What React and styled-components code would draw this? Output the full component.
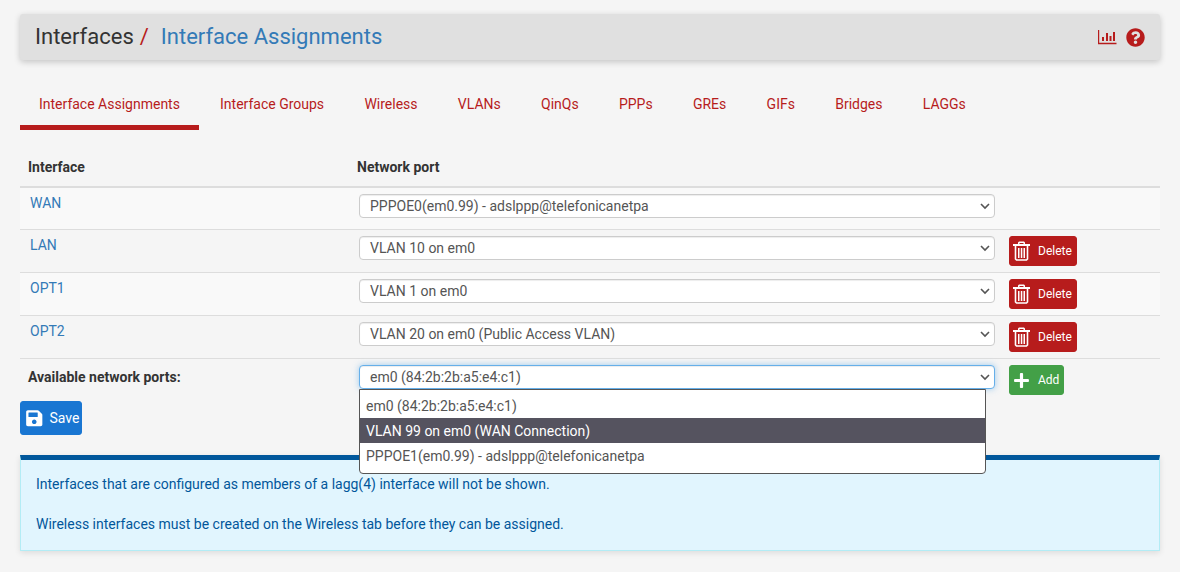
import React from 'react'
import styled, { createGlobalStyle } from 'styled-components'
import { FaSave, FaPlus, FaQuestionCircle } from 'react-icons/fa'

const GlobalStyle = createGlobalStyle`
  html, body {
    margin: 0;
    padding: 0;
    background: #f5f5f5;
  }
  * { box-sizing: border-box; }
`

const Page = styled.div`
  width: 1180px;
  height: 572px;
  padding: 14px 20px 0;
  overflow: hidden;
  font-family: Roboto, "Liberation Sans", sans-serif;
  font-size: 14px;
  color: #333;
`

const Header = styled.div`
  height: 46px;
  padding: 0 15px;
  display: flex;
  align-items: center;
  justify-content: space-between;
  background: #e0e0e0;
  border-radius: 3px;
  box-shadow: 0 2px 6px rgba(0, 0, 0, 0.2);
`

const Crumbs = styled.div`
  font-size: 22px;
  line-height: 46px;
  color: #333;
`

const Slash = styled.span`
  color: #b71c1c;
  margin: 0 12px 0 6px;
`

const Current = styled.span`
  color: #337ab7;
`

const HeaderIcons = styled.div`
  display: flex;
  align-items: center;
  gap: 9px;
  color: #b71c1c;
`

const Tabs = styled.div`
  display: flex;
  margin-top: 20px;
  height: 50px;
`

const Tab = styled.div`
  padding: 14px 20.15px 0;
  line-height: 20px;
  color: #b71c1c;
  border-bottom: 5px solid ${p => (p.$active ? '#b71c1c' : 'transparent')};
  &:first-child {
    padding: 14px 19px 0;
    margin-right: 1px;
  }
`

const HeadRow = styled.div`
  display: grid;
  grid-template-columns: 329px 1fr;
  margin-top: 20px;
  height: 38px;
  padding-top: 7px;
  border-bottom: 2px solid #ddd;
  font-weight: 700;
`

const HeadCell = styled.div`
  padding-left: 8px;
  line-height: 20px;
`

const Row = styled.div`
  display: grid;
  grid-template-columns: 329px 650px 1fr;
  height: ${p => (p.$first ? '42px' : '43px')};
  padding-top: 6px;
  border-bottom: 1px solid #ddd;
  background: ${p => (p.$odd ? '#f9f9f9' : 'transparent')};
`

const LastRow = styled.div`
  display: grid;
  grid-template-columns: 329px 650px 1fr;
  height: 42px;
  padding-top: 6px;
`

const IfaceLink = styled.a`
  padding-left: 10px;
  color: #337ab7;
  line-height: 18px;
`

const PortLabel = styled.div`
  padding-left: 8px;
  font-weight: 700;
  line-height: 24px;
`

const SelectWrap = styled.div`
  position: relative;
  margin-left: 10px;
  width: 636px;
`

const FakeSelect = styled.div`
  height: 24px;
  padding-left: 10px;
  padding-right: 24px;
  display: flex;
  align-items: center;
  color: #555;
  background: #fff;
  border: 1px solid ${p => (p.$focus ? '#66afe9' : '#ccc')};
  border-radius: 4px;
  box-shadow: ${p => (p.$focus
    ? 'inset 0 1px 1px rgba(0,0,0,.075), 0 0 6px rgba(102,175,233,.6)'
    : 'inset 0 1px 1px rgba(0,0,0,.075)')};
`

const Chevron = styled.svg`
  position: absolute;
  right: 4px;
  top: 8px;
`

const Dropdown = styled.div`
  position: absolute;
  top: 24px;
  left: 0;
  width: 627px;
  height: 85px;
  padding-top: 3px;
  z-index: 3;
  background: #fff;
  border: 1px solid #555;
  border-radius: 0 0 4px 4px;
`

const Option = styled.div`
  height: 25px;
  padding-left: 6px;
  line-height: 27px;
  color: ${p => (p.$selected ? '#fff' : '#555')};
  background: ${p => (p.$selected ? '#55535f' : 'transparent')};
`

const ActionCell = styled.div`
  padding-left: 10px;
`

const ActionButton = styled.button`
  display: inline-flex;
  align-items: center;
  height: 30px;
  margin: 0;
  padding: 0 4px 0 3px;
  gap: 8px;
  font-family: Roboto, sans-serif;
  font-size: 12px;
  color: #fff;
  background: ${p => p.$bg};
  border: 1px solid ${p => p.$bg};
  border-radius: 3px;
`

const SaveButton = styled.button`
  display: flex;
  align-items: center;
  width: 62px;
  height: 34px;
  padding: 0 0 0 4px;
  gap: 6px;
  font-family: Roboto, sans-serif;
  font-size: 14px;
  color: #fff;
  background: #1976d2;
  border: 1px solid #1976d2;
  border-radius: 3px;
`

const Alert = styled.div`
  margin-top: 20px;
  height: 96px;
  padding: 14px 15px 0;
  color: #01579b;
  line-height: 20px;
  background: #e1f5fe;
  border: 1px solid #b3ecf5;
  border-top: 5px solid #01579b;
  box-shadow: 0 2px 6px rgba(0, 0, 0, 0.1);
`

const AlertLine = styled.div`
  margin-bottom: 20px;
`

const ports = [
  { name: 'WAN', port: 'PPPOE0(em0.99) - adslppp@telefonicanetpa', odd: true, first: true },
  { name: 'LAN', port: 'VLAN 10 on em0', del: true },
  { name: 'OPT1', port: 'VLAN 1 on em0', del: true, odd: true },
  { name: 'OPT2', port: 'VLAN 20 on em0 (Public Access VLAN)', del: true },
]

const tabs = ['Interface Assignments', 'Interface Groups', 'Wireless', 'VLANs', 'QinQs', 'PPPs', 'GREs', 'GIFs', 'Bridges', 'LAGGs']

const options = ['em0 (84:2b:2b:a5:e4:c1)', 'VLAN 99 on em0 (WAN Connection)', 'PPPOE1(em0.99) - adslppp@telefonicanetpa']

function Arrow() {
  return (
    <Chevron width="12" height="8" viewBox="0 0 12 8">
      <path d="M2 2l4 4 4-4" fill="none" stroke="#555" strokeWidth="1.6" />
    </Chevron>
  )
}

function ChartIcon() {
  return (
    <svg width="19" height="16" viewBox="0 0 19 16">
      <path d="M.5 1v13.500H18.500" fill="none" stroke="#b71c1c" strokeWidth="1.4" />
      <path d="M4 8h2v4H4zM8 4h2v8H8zM11.500 7h2v5h-2zM15 3h2v9h-2z" fill="#b71c1c" />
    </svg>
  )
}

function TrashIcon() {
  return (
    <svg width="17" height="20" viewBox="0 0 17 20">
      <path d="M0 3h17v2H0zM5 3V1.500L6 .5h5l1 1V3h-1.500V2h-4v1z" fill="#fff" />
      <path d="M2.500 5v13l1 1h10l1-1V5" fill="none" stroke="#fff" strokeWidth="1.6" />
      <path d="M5 7h1.500v10H5zM7.800 7h1.500v10H7.800zM10.500 7H12v10h-1.500z" fill="#fff" />
    </svg>
  )
}

export default function App() {
  return (
    <Page>
      <GlobalStyle />
      <Header>
        <Crumbs>
          Interfaces<Slash>/</Slash><Current>Interface Assignments</Current>
        </Crumbs>
        <HeaderIcons>
          <ChartIcon />
          <FaQuestionCircle size={19} />
        </HeaderIcons>
      </Header>
      <Tabs>
        {tabs.map((t, i) => (
          <Tab key={t} $active={i === 0}>{t}</Tab>
        ))}
      </Tabs>
      <HeadRow>
        <HeadCell>Interface</HeadCell>
        <HeadCell>Network port</HeadCell>
      </HeadRow>
      {ports.map(p => (
        <Row key={p.name} $odd={p.odd} $first={p.first}>
          <IfaceLink>{p.name}</IfaceLink>
          <SelectWrap>
            <FakeSelect>{p.port}</FakeSelect>
            <Arrow />
          </SelectWrap>
          {p.del && (
            <ActionCell>
              <ActionButton $bg="#b71c1c"><TrashIcon />Delete</ActionButton>
            </ActionCell>
          )}
        </Row>
      ))}
      <LastRow>
        <PortLabel>Available network ports:</PortLabel>
        <SelectWrap>
          <FakeSelect $focus>{options[0]}</FakeSelect>
          <Arrow />
          <Dropdown>
            {options.map((o, i) => (
              <Option key={o} $selected={i === 1}>{o}</Option>
            ))}
          </Dropdown>
        </SelectWrap>
        <ActionCell>
          <ActionButton $bg="#43a047"><FaPlus size={17} />Add</ActionButton>
        </ActionCell>
      </LastRow>
      <SaveButton><FaSave size={18.5} />Save</SaveButton>
      <Alert>
        <AlertLine>Interfaces that are configured as members of a lagg(4) interface will not be shown.</AlertLine>
        <AlertLine>Wireless interfaces must be created on the Wireless tab before they can be assigned.</AlertLine>
      </Alert>
    </Page>
  )
}
